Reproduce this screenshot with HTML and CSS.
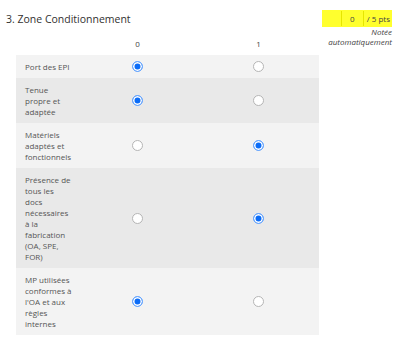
FILE: index.html
```html
<!DOCTYPE html>
<html lang="fr">
<head>
    <meta charset="UTF-8">
    <meta name="viewport" content="width=device-width, initial-scale=1.0">
    <title>Zone Conditionnement</title>
    <link rel="stylesheet" href="styles.css">
</head>
<body>
    <div class="question">
        <div class="head">
            <h2 class="title">3. Zone Conditionnement</h2>
            <div class="score">
                <span class="score-box">0</span>
                <span class="score-max">/ 5 pts</span>
            </div>
        </div>

        <div class="main">
            <div class="likert">
                <div class="row row-head">
                    <div></div>
                    <div class="col">0</div>
                    <div class="col">1</div>
                </div>
                <div class="row">
                    <div class="label">Port des EPI</div>
                    <div class="col"><span class="radio on"></span></div>
                    <div class="col"><span class="radio"></span></div>
                </div>
                <div class="row">
                    <div class="label">Tenue propre et adaptée</div>
                    <div class="col"><span class="radio on"></span></div>
                    <div class="col"><span class="radio"></span></div>
                </div>
                <div class="row">
                    <div class="label">Matériels adaptés et fonctionnels</div>
                    <div class="col"><span class="radio"></span></div>
                    <div class="col"><span class="radio on"></span></div>
                </div>
                <div class="row">
                    <div class="label">Présence de tous les docs nécessaires à la fabrication (OA, SPE, FOR)</div>
                    <div class="col"><span class="radio"></span></div>
                    <div class="col"><span class="radio on"></span></div>
                </div>
                <div class="row">
                    <div class="label">MP utilisées conformes à l'OA et aux règles internes</div>
                    <div class="col"><span class="radio on"></span></div>
                    <div class="col"><span class="radio"></span></div>
                </div>
            </div>
            <div class="note">Notée<br>automatiquement</div>
        </div>
    </div>
</body>
</html>
```

FILE: styles.css
```css
body {
    margin: 0;
    background: #fff;
    font-family: "Open Sans", "Noto Sans", sans-serif;
    color: #323130;
}
.question {
    padding: 10px 8px 0 6px;
}
.head {
    display: flex;
    justify-content: space-between;
    align-items: center;
    height: 17px;
}
.title {
    margin: 0;
    font-size: 10.5px;
    font-weight: normal;
    color: #323130;
}
.score {
    display: flex;
    align-items: center;
    height: 17px;
    padding: 0 2px 0 19px;
    background: #ffff2e;
    font-size: 8px;
    color: #444;
}
.score-box {
    width: 21px;
    height: 15px;
    line-height: 15px;
    text-align: center;
    border-left: 1px solid #e6e600;
    border-right: 1px solid #e6e600;
    margin-right: 3px;
}
.main {
    display: flex;
    justify-content: space-between;
}
.likert {
    margin-left: 10px;
    width: 303px;
}
.row {
    display: grid;
    grid-template-columns: 61px 121px 121px;
    font-size: 8px;
    line-height: 11px;
    background: #f3f3f3;
}
.row:nth-child(odd) {
    background: #e9e9e9;
}
.row-head,
.row-head:nth-child(odd) {
    background: #fff;
    height: 28px;
    align-items: end;
    color: #444;
}
.row-head .col {
    padding-bottom: 6px;
}
.label {
    padding: 6px 5px 6px 9px;
    color: #555;
}
.col {
    display: flex;
    justify-content: center;
    align-items: center;
}
.radio {
    box-sizing: border-box;
    width: 11px;
    height: 11px;
    border-radius: 50%;
    border: 1px solid #b5b5b5;
    background: #fff;
}
.radio.on {
    border-color: #6aa8ff;
    background: #0b6cf7;
    box-shadow: inset 0 0 0 1.5px #fff;
}
.note {
    margin-top: 0;
    font-size: 8px;
    line-height: 10px;
    font-style: italic;
    text-align: right;
    color: #444;
}
```
